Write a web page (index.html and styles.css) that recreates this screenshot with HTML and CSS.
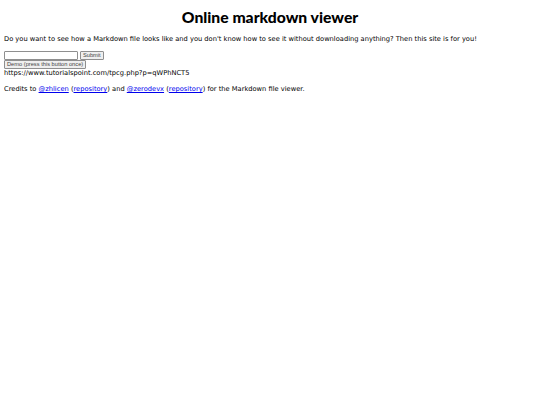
FILE: index.html
```html
<!DOCTYPE html>
<html>
<head>
<meta charset="utf-8">
<link rel="stylesheet" href="styles.css">
</head>
<body>
<h1 class="title">Online markdown viewer</h1>
<p class="intro">Do you want to see how a Markdown file looks like and you don't know how to see it without downloading anything? Then this site is for you!</p>
<form class="form">
<div class="row"><input class="field" type="text"><button class="btn" type="button">Submit</button></div>
<div class="row"><button class="btn" type="button">Demo (press this button once)</button></div>
</form>
<div class="url">https://www.tutorialspoint.com/tpcg.php?p=qWPhNCT5</div>
<p class="credits">Credits to <a href="#">@zhlicen</a> (<a href="#">repository</a>) and <a href="#">@zerodevx</a> (<a href="#">repository</a>) for the Markdown file viewer.</p>
</body>
</html>
```
FILE: styles.css
```css
html, body { background: #fff; }
body {
  margin: 4px;
  font-family: "DejaVu Sans", sans-serif;
  font-size: 6.7px;
  line-height: 8px;
  color: #000;
}
.title {
  font-family: "Lato", sans-serif;
  font-size: 15.7px;
  line-height: 18px;
  font-weight: 900;
  text-align: center;
  margin: 4px 0 9px;
}
.intro { margin: 0 0 8px; }
.form { margin: 0; }
.row { display: flex; gap: 2px; align-items: center; }
.field {
  width: 70px;
  height: 5px;
  font-size: 5px;
  padding: 1px;
  border: 1px solid #8f8f8f;
  border-radius: 1px;
  margin: 0;
}
.btn {
  font-family: "Liberation Sans", Arial, sans-serif;
  font-size: 5.7px;
  padding: 1px 2px;
  margin: 0;
  border: 1px solid #8f8f8f;
  border-radius: 1px;
  background: #efefef;
  color: #444;
  line-height: 5px;
}
.url { margin-top: 0; }
.credits { margin: 8px 0; }
a { color: #0000ee; }
```
